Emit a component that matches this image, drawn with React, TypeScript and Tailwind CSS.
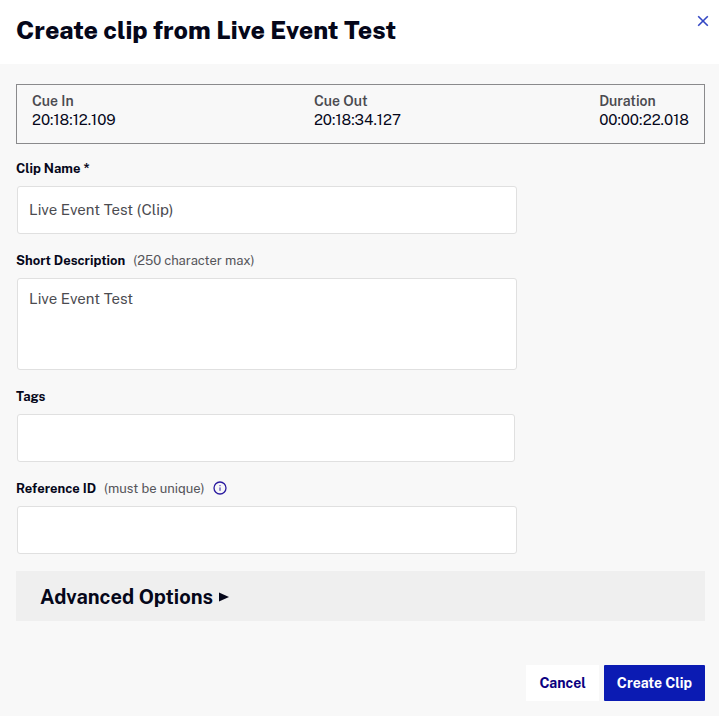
import { useState } from "react";
import type { ReactNode } from "react";

const cues = [
  { label: "Cue In", value: "20:18:12.109" },
  { label: "Cue Out", value: "20:18:34.127" },
  { label: "Duration", value: "00:00:22.018" },
];

const inputClass =
  "ml-px block h-12 w-full rounded-[3px] border border-[#e0e0e0] bg-white px-[11px] pb-[2px] text-[15px] text-[#4b4b50] outline-none focus:border-[#0b1bb3]";

function FieldLabel({ htmlFor, hint, children }: { htmlFor: string; hint?: string; children: ReactNode }) {
  return (
    <label htmlFor={htmlFor} className="text-[13px] leading-5 font-bold text-[#05071a]">
      {children}
      {hint && <span className="ml-2 font-normal text-[#55555a]">{hint}</span>}
    </label>
  );
}

function InfoIcon() {
  return (
    <svg viewBox="0 0 14 14" className="size-[14px]" fill="none" stroke="#2a1aa0" aria-hidden="true">
      <circle cx="7" cy="7" r="6" strokeWidth="1.3" />
      <path d="M7 6.4v3.4M7 4.1v1.1" strokeWidth="1" />
    </svg>
  );
}

export default function App() {
  const [name, setName] = useState("Live Event Test (Clip)");
  const [description, setDescription] = useState("Live Event Test");
  const [tags, setTags] = useState("");
  const [reference, setReference] = useState("");

  return (
    <div className="min-h-screen bg-[#f8f8f8] font-['Public_Sans','Inter','Liberation_Sans',sans-serif] text-[#05071a]">
      <header className="flex h-16 items-start justify-between bg-white pr-[10px] pl-4">
        <h1 className="pt-3 text-[25px] leading-9 font-extrabold">
          Create clip from Live Event Test
        </h1>
        <button type="button" aria-label="Close" className="mt-[15px] cursor-pointer">
          <svg viewBox="0 0 12 12" className="size-3" fill="none" stroke="#3347c4" strokeWidth="1.6" aria-hidden="true">
            <path d="M1.2 1.2l9.6 9.6M10.8 1.2l-9.6 9.6" />
          </svg>
        </button>
      </header>

      <main className="pt-5 pr-[14px] pb-[15px] pl-4">
        <dl className="flex h-[60px] justify-between border border-[#8a8a8c] px-[15px] pt-[7px]">
          {cues.map((cue) => (
            <div key={cue.label}>
              <dt className="text-sm leading-[18px] font-semibold text-[#4b4b50]">{cue.label}</dt>
              <dd className="text-[15px] leading-5">{cue.value}</dd>
            </div>
          ))}
        </dl>

        <form className="pt-[15px]" onSubmit={(e) => e.preventDefault()}>
          <div className="flex max-w-[500px] flex-col gap-[17px]">
            <div className="flex flex-col gap-[7px]">
              <FieldLabel htmlFor="clip-name">Clip Name *</FieldLabel>
              <input id="clip-name" className={inputClass} value={name} onChange={(e) => setName(e.target.value)} />
            </div>
            <div className="flex flex-col gap-[7px]">
              <FieldLabel htmlFor="description" hint="(250 character max)">Short Description</FieldLabel>
              <textarea
                id="description"
                maxLength={250}
                className="ml-px block h-[92px] w-full resize-none rounded-[3px] border border-[#e0e0e0] bg-white px-[11px] py-[9px] text-[15px] leading-[22px] text-[#4b4b50] outline-none focus:border-[#0b1bb3]"
                value={description}
                onChange={(e) => setDescription(e.target.value)}
              />
            </div>
            <div className="flex flex-col gap-[7px] pr-[2px]">
              <FieldLabel htmlFor="tags">Tags</FieldLabel>
              <input id="tags" className={inputClass} value={tags} onChange={(e) => setTags(e.target.value)} />
            </div>
            <div className="flex flex-col gap-[7px]">
              <div className="flex h-5 items-center gap-2">
                <FieldLabel htmlFor="reference" hint="(must be unique)">Reference ID</FieldLabel>
                <button type="button" aria-label="About reference IDs" className="cursor-pointer pb-[2px]">
                  <InfoIcon />
                </button>
              </div>
              <input id="reference" className={inputClass} value={reference} onChange={(e) => setReference(e.target.value)} />
            </div>
          </div>

          <button
            type="button"
            aria-expanded="false"
            className="mt-[17px] flex h-[50px] w-full cursor-pointer items-center gap-[6px] bg-[#efefef] px-6 pt-[2px] text-xl font-bold"
          >
            Advanced Options
            <svg viewBox="0 0 10 10" className="size-[10px]" fill="currentColor" aria-hidden="true">
              <path d="M0 0.5L10 5L0 9.5z" />
            </svg>
          </button>

          <div className="mt-11 flex justify-end gap-[5px]">
            <button type="button" className="h-9 cursor-pointer bg-white px-[13px] text-sm font-bold text-[#0a0080]">
              Cancel
            </button>
            <button type="submit" className="h-9 cursor-pointer rounded-[1px] bg-[#0b1bb3] px-[13px] text-sm font-bold text-white">
              Create Clip
            </button>
          </div>
        </form>
      </main>
    </div>
  );
}
